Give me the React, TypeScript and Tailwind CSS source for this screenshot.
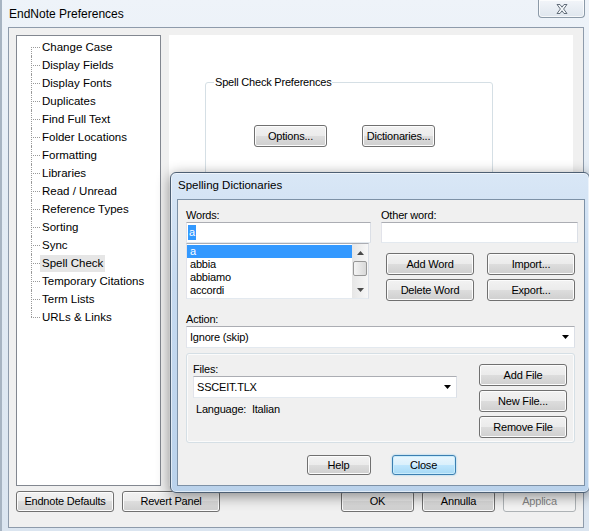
import React from "react";

const ms = "font-['Liberation_Sans',Arial,sans-serif] text-[11px] tracking-[-0.2px] text-black";
const ui = "font-['Liberation_Sans',Arial,sans-serif] text-[11.5px] text-black";

const btn =
  "flex items-center justify-center rounded-[3px] border border-[#707070] bg-[linear-gradient(#f2f2f2_0%,#ebebeb_50%,#dddddd_50%,#cfcfcf_100%)] shadow-[inset_0_0_0_1px_#fcfcfc] shrink-0";

const field = "bg-white border border-[#abadb3] border-l-[#e2e3ea] border-r-[#dbdfe6] border-b-[#e3e9ef]";

function Btn({ label, className = "" }: { label: string; className?: string }) {
  return <div className={`${btn} ${className}`}>{label}</div>;
}

function Tri({ up = false, color = "#000" }: { up?: boolean; color?: string }) {
  return (
    <svg width="7" height="4" viewBox="0 0 7 4">
      <path d={up ? "M0 4H7L3.5 0Z" : "M0 0H7L3.5 4Z"} fill={color} />
    </svg>
  );
}

const treeItems = [
  "Change Case",
  "Display Fields",
  "Display Fonts",
  "Duplicates",
  "Find Full Text",
  "Folder Locations",
  "Formatting",
  "Libraries",
  "Read / Unread",
  "Reference Types",
  "Sorting",
  "Sync",
  "Spell Check",
  "Temporary Citations",
  "Term Lists",
  "URLs & Links",
];

function Tree() {
  const last = treeItems.length - 1;
  return (
    <div className={`${ui} w-[145px] h-full bg-white border border-[#828790] pt-[2px]`}>
      {treeItems.map((t, i) => (
        <div key={t} className="flex h-[18px] items-center">
          <div className="relative h-full w-[9px] ml-[14px] shrink-0">
            {/* dotted connector lines */}
            <div
              className={`absolute left-0 w-0 border-l border-dotted border-[#9a9a9a] ${
                i === 0 ? "top-[9px] bottom-0" : i === last ? "top-0 h-[9px]" : "top-0 bottom-0"
              }`}
            />
            <div className="absolute left-0 top-[9px] w-[9px] border-t border-dotted border-[#9a9a9a]" />
          </div>
          <span className={`px-[2px] leading-[17px] whitespace-nowrap ${t === "Spell Check" ? "bg-[#e6e6e6]" : ""}`}>
            {t}
          </span>
        </div>
      ))}
    </div>
  );
}

function CloseGlyph() {
  return (
    <svg width="12" height="10" viewBox="0 0 12 10">
      <path
        d="M1 0.5H4L6 3.2L8 0.5H11L7.6 5L11 9.5H8L6 6.8L4 9.5H1L4.4 5Z"
        fill="#f5f8fb"
        stroke="#56616e"
        strokeWidth="0.9"
        strokeLinejoin="round"
      />
    </svg>
  );
}

function SpellingDialog() {
  const words = ["a", "abbia", "abbiamo", "accordi"];
  return (
    <div className="absolute left-[168px] top-[172px] w-[420px] h-[321px] rounded-[6px] border border-[#4d5f73] bg-[linear-gradient(180deg,#d9e7f6_0%,#c6daf0_35%,#bad2eb_100%)] shadow-[0_3px_14px_rgba(0,0,0,0.45),inset_0_0_0_1px_rgba(255,255,255,0.55)] flex flex-col">
      <div className={`${ui} h-[26px] flex items-center pl-[7px]`}>Spelling Dictionaries</div>
      <div className={`${ms} ml-[6px] w-[408px] h-[287px] border border-[#7d91a6] bg-[#f0f0f0] flex flex-col pt-[8px] pl-[8px]`}>
        <div className="flex">
          <div className="w-[185px] flex flex-col">
            <div className="h-[14px] leading-[14px]">Words:</div>
            <div className={`${field} h-[21px] flex items-center pl-[1px]`}>
              <span className="bg-[#3399ff] text-white leading-[15px] px-[1px]">a</span>
            </div>
            <div className={`${field} w-[183px] h-[56px] flex`}>
              <div className="flex-1 pt-[1px]">
                {words.map((w, i) => (
                  <div
                    key={w}
                    className={`h-[13px] leading-[13px] pl-[3px] ${i === 0 ? "bg-[#3399ff] text-white" : ""}`}
                  >
                    {w}
                  </div>
                ))}
              </div>
              <div className="w-[16px] flex flex-col bg-[linear-gradient(90deg,#e6e6e6,#f7f7f7)]">
                <div className="h-[17px] flex items-center justify-center">
                  <Tri up color="#4a4a4a" />
                </div>
                <div className="h-[15px] mx-[1px] rounded-[2px] border border-[#979797] bg-[linear-gradient(90deg,#f4f4f4,#d9d9d9)]" />
                <div className="flex-1" />
                <div className="h-[17px] flex items-center justify-center">
                  <Tri color="#4a4a4a" />
                </div>
              </div>
            </div>
          </div>
          <div className="ml-[10px] flex flex-col">
            <div className="h-[14px] leading-[14px]">Other word:</div>
            <div className={`${field} w-[197px] h-[21px]`} />
            <div className="ml-[5px] mt-[10px] flex gap-[13px]">
              <Btn label="Add Word" className="w-[88px] h-[22px]" />
              <Btn label="Import..." className="w-[88px] h-[22px]" />
            </div>
            <div className="ml-[5px] mt-[4px] flex gap-[13px]">
              <Btn label="Delete Word" className="w-[88px] h-[22px]" />
              <Btn label="Export..." className="w-[88px] h-[22px]" />
            </div>
          </div>
        </div>

        <div className="mt-[12px] h-[13px] leading-[13px]">Action:</div>
        <div className={`${field} w-[389px] h-[22px] flex items-center justify-between pl-[3px] pr-[5px]`}>
          <span>Ignore (skip)</span>
          <Tri />
        </div>

        <div className="mt-[5px] w-[389px] h-[90px] rounded-[3px] border border-[#d5dfe5] shadow-[inset_0_0_0_1px_#fbfbfb] flex">
          <div className="pl-[6px] pt-[8px] flex flex-col">
            <div className="h-[14px] leading-[14px]">Files:</div>
            <div className={`${field} w-[264px] h-[22px] flex items-center justify-between pl-[3px] pr-[5px]`}>
              <span>SSCEIT.TLX</span>
              <Tri />
            </div>
            <div className="mt-[4px] pl-[3px] h-[14px] leading-[14px] whitespace-pre">Language:  Italian</div>
          </div>
          <div className="ml-auto mr-[7px] pt-[10px] flex flex-col gap-[4px]">
            <Btn label="Add File" className="w-[88px] h-[22px]" />
            <Btn label="New File..." className="w-[88px] h-[22px]" />
            <Btn label="Remove File" className="w-[88px] h-[22px]" />
          </div>
        </div>

        <div className="mt-[12px] flex justify-center gap-[21px] pr-[8px]">
          <Btn label="Help" className="w-[64px] h-[20px]" />
          <div className="w-[64px] h-[20px] flex items-center justify-center rounded-[3px] border border-[#3c7fb1] bg-[linear-gradient(#eaf6fd_0%,#d9f0fc_50%,#bee6fd_50%,#a7d9f5_100%)] shadow-[inset_0_0_0_1px_#c9ecfc,0_0_2px_#7fc4ea]">
            Close
          </div>
        </div>
      </div>
    </div>
  );
}

export default function App() {
  return (
    <div className="relative w-[589px] h-[531px] overflow-hidden border-l-[2px] border-l-[#a7b4c2] bg-[linear-gradient(180deg,#eef3f9_0%,#e2ebf4_40%,#dbe5f0_100%)] flex flex-col">
      {/* title bar */}
      <div className="h-[27px] flex shrink-0">
        <div className={`${ui} pl-[7px] h-[27px] flex items-center text-[12px]`}>EndNote Preferences</div>
        <div className="ml-auto mr-[4px] w-[47px] h-[18px] rounded-b-[4px] border border-t-0 border-[#8c9aa8] bg-[linear-gradient(180deg,#f2f5f9,#dfe6ee)] shadow-[inset_0_0_0_1px_rgba(255,255,255,0.7)] flex items-center justify-center">
          <CloseGlyph />
        </div>
      </div>

      {/* client area */}
      <div className="ml-[6px] w-[576px] h-[501px] border border-[#8e9bab] bg-[#f0f0f0] flex flex-col pt-[7px] px-[7px]">
        <div className="flex gap-[8px] h-[451px]">
          <Tree />
          <div className="w-[404px] h-full bg-white">
            <div className="relative ml-[36px] mt-[47px] w-[288px] h-[150px] rounded-[3px] border border-[#d5dfe5]">
              <span className={`${ms} absolute left-[8px] -top-[8px] bg-white px-[1px] leading-[14px]`}>
                Spell Check Preferences
              </span>
              <div className={`${ms} flex ml-[48px] mt-[42px] gap-[35px]`}>
                <Btn label="Options..." className="w-[73px] h-[22px]" />
                <Btn label="Dictionaries..." className="w-[73px] h-[22px]" />
              </div>
            </div>
          </div>
        </div>
        <div className={`${ms} mt-[5px] flex justify-between`}>
          <div className="flex gap-[8px]">
            <Btn label="Endnote Defaults" className="w-[98px] h-[21px]" />
            <Btn label="Revert Panel" className="w-[98px] h-[21px]" />
          </div>
          <div className="flex gap-[8px]">
            <Btn label="OK" className="w-[73px] h-[21px]" />
            <Btn label="Annulla" className="w-[73px] h-[21px]" />
            <div className="w-[73px] h-[21px] flex items-center justify-center rounded-[3px] border border-[#adb2b5] bg-[#f4f4f4] text-[#838383]">
              Applica
            </div>
          </div>
        </div>
      </div>

      <SpellingDialog />
    </div>
  );
}
